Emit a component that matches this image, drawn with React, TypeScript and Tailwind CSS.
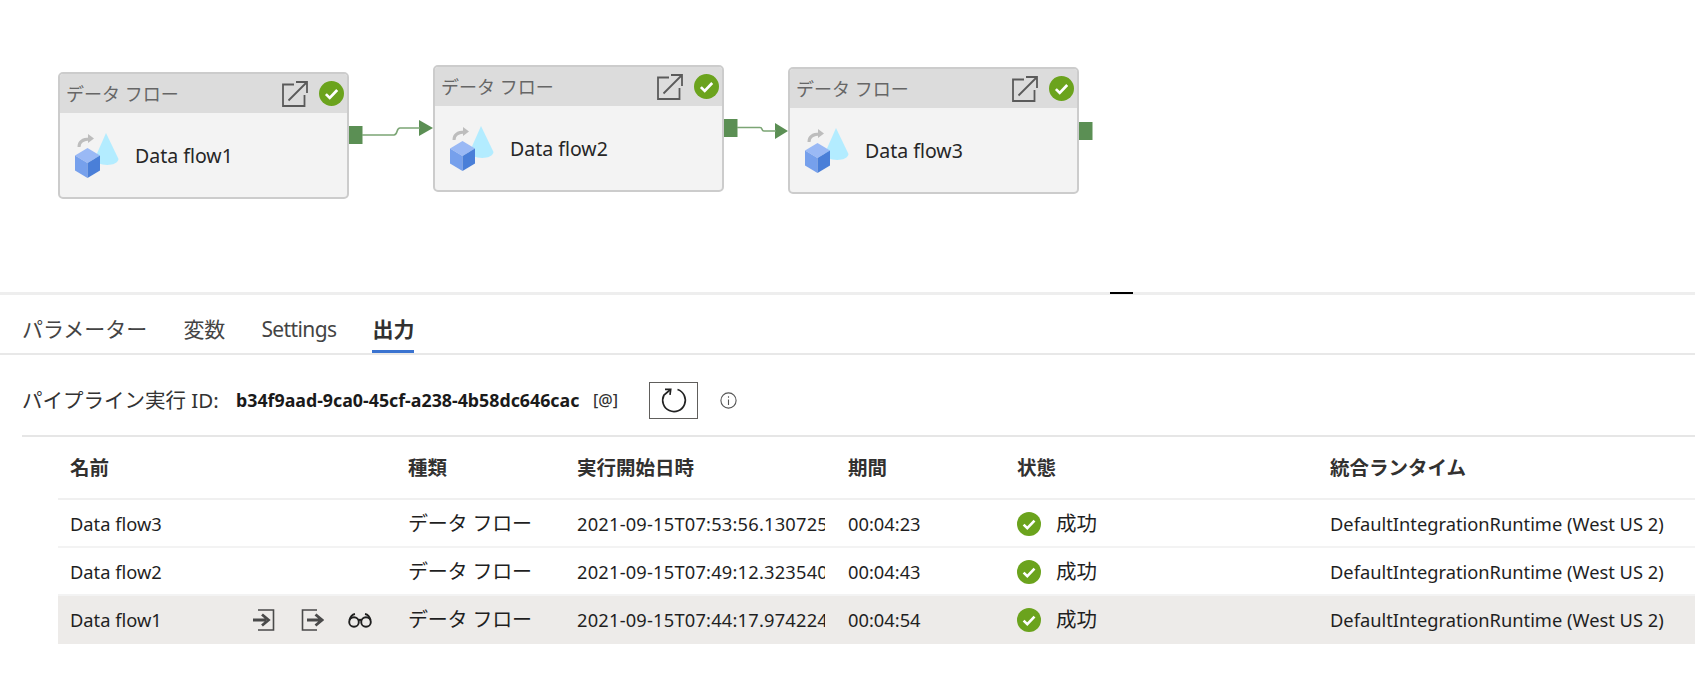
import React from "react";

const FONT = { fontFamily: '"Noto Sans", "Noto Sans CJK JP", sans-serif' };

function Check({ size = 24 }: { size?: number }) {
  return (
    <svg width={size} height={size} viewBox="0 0 24 24" className="shrink-0">
      <circle cx="12" cy="12" r="12" fill="#6ba31d" />
      <path d="M6.600 12.600l3.700 3.600 7.200-7.600" fill="none" stroke="#fff" strokeWidth="2.600" />
    </svg>
  );
}

function DataFlowIcon() {
  return (
    <svg width="54" height="54" viewBox="0 0 54 54" className="shrink-0">
      <path d="M36 5 L25 30 C24 38 47 40 48.500 31 Z" fill="#b3ecff" />
      <path d="M9 19 C9 13 14 11 20 11" fill="none" stroke="#bdbdbd" strokeWidth="3" />
      <path d="M18 6 L24 10.500 L18 15 Z" fill="#bdbdbd" />
      <path d="M17.500 20 L30 27.500 L17.500 35 L5 27.500 Z" fill="#9ab9f5" />
      <path d="M5 27.500 L17.500 35 L17.500 50 L5 42.500 Z" fill="#76a0ec" />
      <path d="M30 27.500 L17.500 35 L17.500 50 L30 42.500 Z" fill="#4a7fd8" />
    </svg>
  );
}

function ExternalIcon() {
  return (
    <svg width="26" height="26" viewBox="0 0 26 26" className="shrink-0" fill="none" stroke="#5a5a5a" strokeWidth="1.800">
      <path d="M12 3.500H1V25H22.500V14" />
      <path d="M6.500 19.500L24.500 1.500M14 1H25V12" />
    </svg>
  );
}

function Node({ className, name }: { className: string; name: string }) {
  return (
    <div className={`absolute w-[291px] h-[127px] bg-[#f3f3f3] border-2 border-[#cccccc] rounded-[5px] overflow-hidden ${className}`}>
      <div className="h-[39px] bg-[#dcdcdc] flex items-center pl-[6px] pr-[3px]">
        <span className="text-[18px] text-[#666666] whitespace-nowrap flex-1 mt-[2px]">データ フロー</span>
        <ExternalIcon />
        <span className="w-[11px]" />
        <Check size={25} />
      </div>
      <div className="flex items-center h-[84px] pl-[10px]">
        <DataFlowIcon />
        <span className="ml-[11px] mt-[1px] text-[19.500px] text-[#262626] whitespace-nowrap">{name}</span>
      </div>
    </div>
  );
}

function Row({ name, start, dur, active }: { name: string; start: string; dur: string; active?: boolean }) {
  return (
    <div className={`flex items-center h-[48px] ml-[58px] pl-[12px] pt-[1px] border-b-2 ${active ? "bg-[#edebe9] border-[#edebe9]" : "border-[#f3f3f3]"}`}>
      <div className="w-[338px] flex items-center">
        <span className="w-[182px] text-[#1f1f1f] text-[18.300px]">{name}</span>
        {active && (
          <div className="flex items-center gap-[24px]">
            <svg width="24" height="22" viewBox="0 0 24 22" fill="none" stroke="#4a4a4a" strokeWidth="2.800">
              <path d="M6 1H21.500V21H6" strokeWidth="1.600" />
              <path d="M1 11H14M10 5.500L16.500 11L10 16.500" />
            </svg>
            <svg width="24" height="22" viewBox="0 0 24 22" fill="none" stroke="#4a4a4a" strokeWidth="2.800">
              <path d="M17 1H2.500V21H17" strokeWidth="1.600" />
              <path d="M7 11H20M15.500 5.500L22 11L15.500 16.500" />
            </svg>
            <svg width="24" height="16" viewBox="0 0 24 16" fill="none" stroke="#1f1f1f" strokeWidth="1.900">
              <circle cx="6" cy="10" r="4.800" />
              <circle cx="18" cy="10" r="4.800" />
              <path d="M10.500 8.500C11.500 7.500 12.500 7.500 13.500 8.500M1.500 8C2.500 4 4.500 2.500 7 2M22.500 8C21.500 4 19.500 2.500 17 2" />
            </svg>
          </div>
        )}
      </div>
      <div className="w-[169px] text-[20px] text-[#1f1f1f] whitespace-nowrap tracking-[-0.2px]">データ フロー</div>
      <div className="w-[271px]">
        <div className="w-[248px] overflow-hidden whitespace-nowrap text-[18.300px] tracking-[0.2px] text-[#1f1f1f]">{start}</div>
      </div>
      <div className="w-[169px] text-[18.300px] text-[#1f1f1f]">{dur}</div>
      <div className="w-[313px] flex items-center gap-[15px] text-[20.500px] text-[#1f1f1f]">
        <Check />
        <span>成功</span>
      </div>
      <div className="flex-1 whitespace-nowrap text-[18.300px] text-[#1f1f1f]">DefaultIntegrationRuntime (West US 2)</div>
    </div>
  );
}

function Tab({ label, active, latin }: { label: string; active?: boolean; latin?: boolean }) {
  return (
    <div className={`h-[39px] flex items-start whitespace-nowrap text-[21px] leading-[30px] ${latin ? "tracking-[-0.6px]" : ""} ${active ? "font-bold text-[#323130] border-b-[3px] border-[#3a73d0]" : "text-[#444444]"}`}>
      {label}
    </div>
  );
}

export default function App() {
  return (
    <div className="w-[1695px] h-[678px] overflow-hidden bg-white" style={FONT}>
      <div className="relative h-[292px]">
        <Node className="left-[58px] top-[72px]" name="Data flow1" />
        <Node className="left-[433px] top-[65px]" name="Data flow2" />
        <Node className="left-[788px] top-[67px]" name="Data flow3" />
        <svg className="absolute left-0 top-0" width="1100" height="292">
          <g fill="#5b8f54">
            <rect x="349" y="126" width="13.500" height="18" />
            <rect x="724" y="119" width="13.500" height="18" />
            <rect x="1079" y="122" width="13.500" height="18" />
            <path d="M419 120L433 128L419 136Z" />
            <path d="M775 123L788 131L775 139Z" />
          </g>
          <g fill="none" stroke="#7ba574" strokeWidth="1.600">
            <path d="M362 135H394C398 135 396 128 400 128H420" />
            <path d="M737 127.500H760C763 127.500 761 131 764 131H776" />
          </g>
        </svg>
      </div>
      <div className="h-[3px] bg-[#eeeeee] relative">
        <div className="absolute left-[1110px] top-0 w-[23px] h-[2px] bg-black" />
      </div>
      <div className="h-[60px] flex items-end gap-[36px] pl-[22px] border-b-2 border-[#e8e8e8]">
        <Tab label="パラメーター" />
        <Tab label="変数" />
        <Tab label="Settings" latin />
        <Tab label="出力" active />
      </div>
      <div className="ml-[22px] h-[82px] pt-[10px] flex items-center border-b-2 border-[#e6e6e6]">
        <span className="text-[20.500px] text-[#333333] w-[214px] whitespace-nowrap">パイプライン実行 ID:</span>
        <span className="text-[17.800px] font-bold text-[#1a1a1a] w-[357px] whitespace-nowrap">b34f9aad-9ca0-45cf-a238-4b58dc646cac</span>
        <span className="text-[16px] font-medium text-[#333333] w-[56px]">[@]</span>
        <div className="w-[49px] h-[37px] border border-[#605e5c] flex items-center justify-center">
          <svg width="28" height="28" viewBox="0 0 28 28" fill="none" stroke="#222222" strokeWidth="1.700">
            <path d="M17.500 3.500A11.300 11.300 0 1 1 4 9L10.500 3.500" />
            <path d="M5 3.300H10.700L10 8.800" />
          </svg>
        </div>
        <svg className="ml-[22px]" width="17" height="17" viewBox="0 0 17 17" fill="none" stroke="#555555" strokeWidth="1.100">
          <circle cx="8.500" cy="8.500" r="7.600" />
          <path d="M8.500 7.500V13M8.500 4.200V5.800" />
        </svg>
      </div>
      <div className="flex items-center h-[63px] ml-[58px] pl-[12px] border-b-2 border-[#f0f0f0] text-[19.500px] font-bold text-[#323130]">
        <div className="w-[338px]">名前</div>
        <div className="w-[169px]">種類</div>
        <div className="w-[271px]">実行開始日時</div>
        <div className="w-[169px]">期間</div>
        <div className="w-[313px]">状態</div>
        <div className="flex-1">統合ランタイム</div>
      </div>
      <Row name="Data flow3" start="2021-09-15T07:53:56.130725" dur="00:04:23" />
      <Row name="Data flow2" start="2021-09-15T07:49:12.323540" dur="00:04:43" />
      <Row name="Data flow1" start="2021-09-15T07:44:17.974224" dur="00:04:54" active />
    </div>
  );
}
